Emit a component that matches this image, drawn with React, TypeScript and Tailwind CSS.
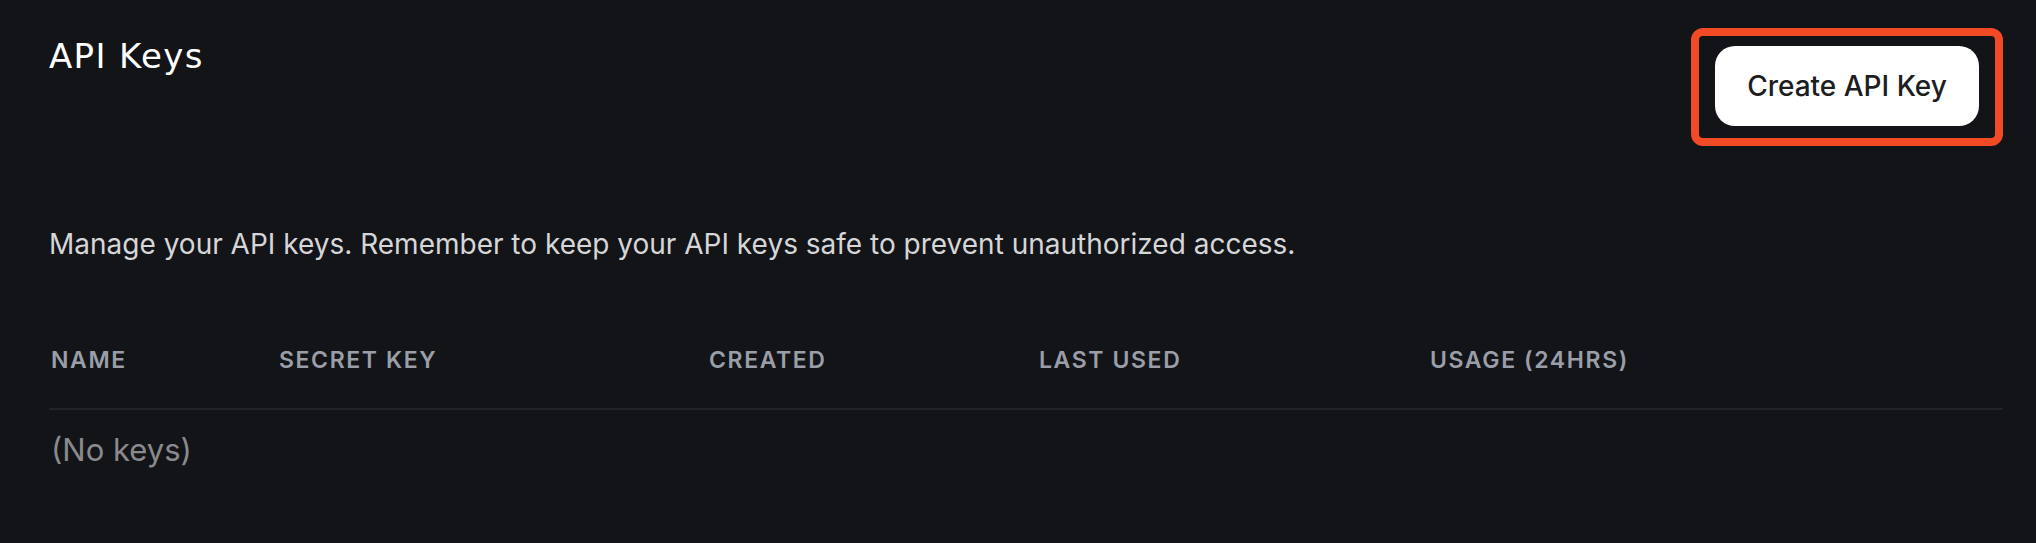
import React from "react";

const columns = [
  { label: "Name", width: "w-[228px]" },
  { label: "Secret Key", width: "w-[430px]" },
  { label: "Created", width: "w-[330px]" },
  { label: "Last Used", width: "w-[391px]" },
  { label: "Usage (24hrs)", width: "flex-1" },
];

const App: React.FC = () => {
  const keys: string[] = [];

  return (
    <div className="min-h-[543px] w-full bg-[#131418] pl-[49px] pr-[33px] pt-[28px] font-['Inter',sans-serif]">
      {/* Cabecera */}
      <div className="flex items-start justify-between">
        <h1 className="mt-[6px] font-['DejaVu_Sans',sans-serif] text-[34px] font-normal leading-[44px] tracking-[0.04em] text-white">
          API Keys
        </h1>
        <div className="rounded-[12px] border-[8px] border-[#f24a25] px-[16px] pb-[12px] pt-[10px]">
          <button className="flex h-[80px] w-[264px] items-center justify-center rounded-[20px] bg-white text-[28px] font-medium text-[#1d1d1f]">
            Create API Key
          </button>
        </div>
      </div>

      <p className="mt-[80px] text-[28px] leading-[36px] text-[#d6d6d9]">
        Manage your API keys. Remember to keep your API keys safe to prevent unauthorized access.
      </p>

      {/* Tabla */}
      <div className="mt-[83px]">
        <div className="flex border-b-2 border-[#222328] pb-[33px]">
          {columns.map((col) => (
            <div
              key={col.label}
              className={`${col.width} pl-[2px] text-[23px] font-semibold uppercase leading-[30px] tracking-[0.07em] text-[#9a9ea8]`}
            >
              {col.label}
            </div>
          ))}
        </div>
        {keys.length === 0 && (
          <div className="pl-[2px] pt-[20px] text-[31px] leading-[40px] text-[#8a8a8e]">(No keys)</div>
        )}
      </div>
    </div>
  );
};

export default App;
